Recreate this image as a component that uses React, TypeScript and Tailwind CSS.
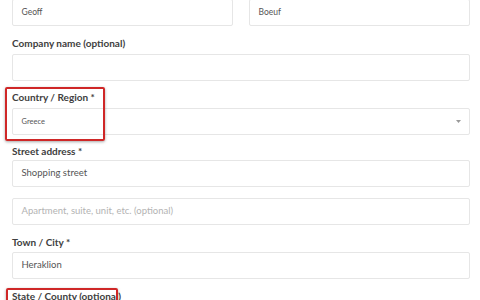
import React from "react"

const font = { fontFamily: "Lato, 'Open Sans', sans-serif" }

function Label({ children, className = "" }: { children: React.ReactNode; className?: string }) {
  return (
    <div className={`text-[10px] leading-[14px] font-bold text-[#404040] ${className}`}>{children}</div>
  )
}

function Input({
  value,
  placeholder,
  small,
  className = "",
}: {
  value?: string
  placeholder?: string
  small?: boolean
  className?: string
}) {
  return (
    <div
      className={`h-[27px] flex items-center px-[8.5px] bg-white border border-[#e6e6e6] rounded-[2px] ${className}`}
    >
      {value ? (
        <span className={`${small ? "text-[8.5px]" : "text-[9.5px]"} text-[#555]`}>{value}</span>
      ) : (
        <span className="text-[9.5px] text-[#b3b3b3]">{placeholder}</span>
      )}
    </div>
  )
}

export default function App() {
  return (
    <div className="relative w-[480px] h-[300px] overflow-hidden bg-white" style={font}>
      <div className="pl-[12px] pr-[10px] mt-[-1px]">
        {/* name row */}
        <div className="grid grid-cols-2 gap-[16px]">
          <Input value="Geoff" small />
          <Input value="Boeuf" small />
        </div>

        <Label className="mt-[10px] mb-[4px]">Company name (optional)</Label>
        <Input />

        <Label className="mt-[9px] mb-[4px]">Country / Region *</Label>
        <div className="h-[27px] flex items-center justify-between pl-[8.5px] pr-[8px] bg-white border border-[#e6e6e6] rounded-[2px]">
          <span className="text-[7.5px] text-[#555]">Greece</span>
          <svg width="5" height="3" viewBox="0 0 5 3">
            <path d="M0 0 L5 0 L2.5 3 Z" fill="#999" />
          </svg>
        </div>

        <Label className="mt-[9px] mb-[2px]">Street address *</Label>
        <Input value="Shopping street" />
        <Input placeholder="Apartment, suite, unit, etc. (optional)" className="mt-[11px]" />

        <Label className="mt-[10px] mb-[3px]">Town / City *</Label>
        <Input value="Heraklion" />

        <Label className="mt-[10px]">State / County (optional)</Label>
      </div>

      {/* annotation boxes */}
      <div className="absolute left-[5px] top-[87px] w-[100px] h-[54px] border-2 border-[#cf2727] rounded-[2px] shadow-[0_1px_3px_rgba(0,0,0,0.35)]" />
      <div className="absolute left-[6px] top-[288px] w-[112px] h-[30px] border-2 border-[#cf2727] rounded-[2px] shadow-[0_1px_3px_rgba(0,0,0,0.35)]" />
    </div>
  )
}
